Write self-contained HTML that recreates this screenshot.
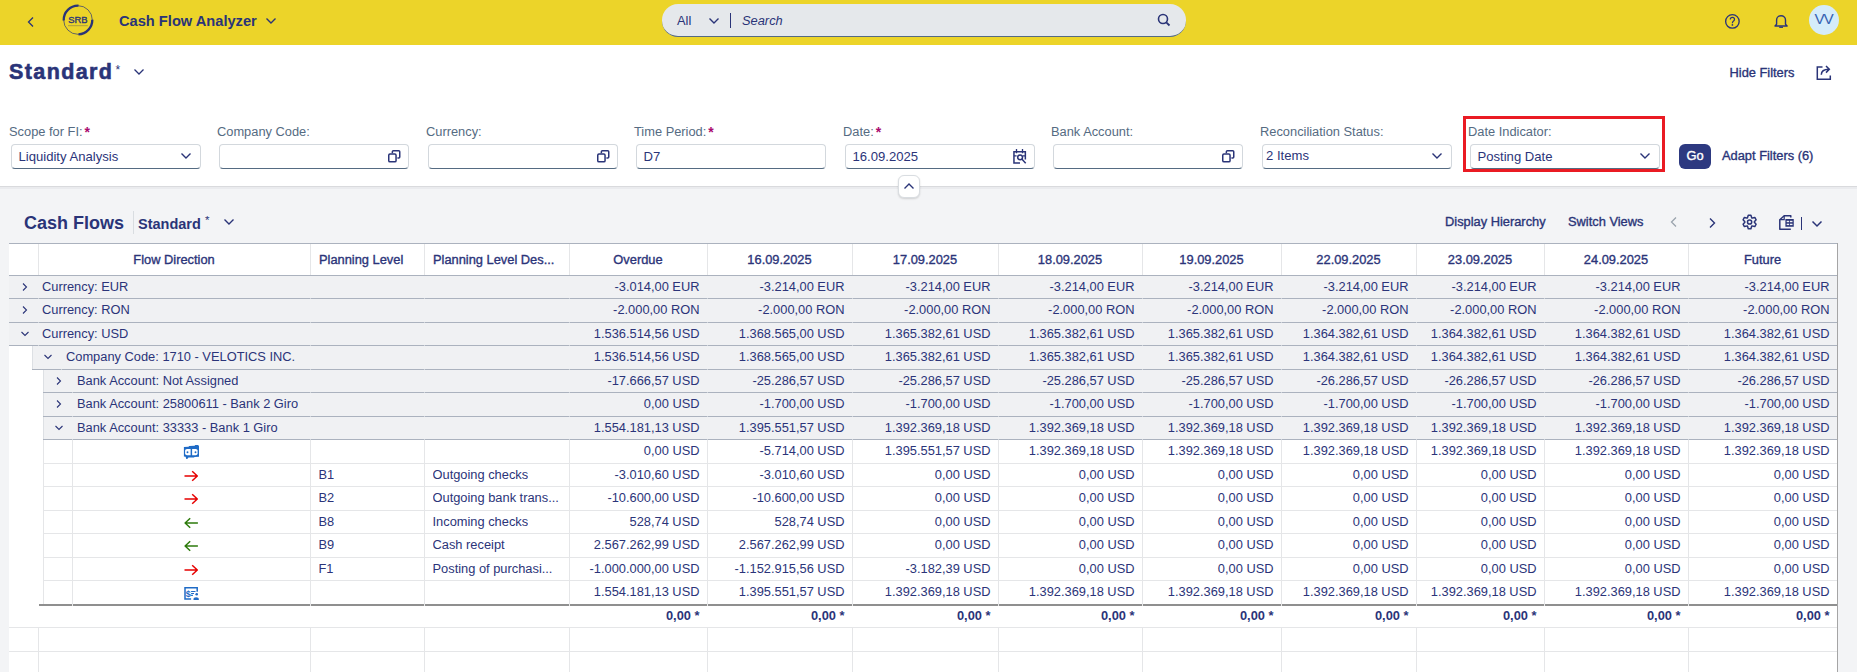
<!DOCTYPE html>
<html><head><meta charset="utf-8">
<style>
*{box-sizing:border-box;margin:0;padding:0}
html,body{width:1857px;height:672px;overflow:hidden;background:#F3F4F6;font-family:"Liberation Sans",sans-serif;color:#2B3479}
.a{position:absolute;white-space:nowrap}
.navy{color:#2A3478}
.lbl{position:absolute;white-space:nowrap;font-size:12.85px;line-height:15px;color:#556B82;top:124.1px}
.req{color:#AA0A6E;font-weight:bold;margin-left:2px;font-size:14px;line-height:0;position:relative;top:0.5px}
.inp{position:absolute;top:144px;height:25px;width:190px;border:1px solid #D3D8DD;border-bottom:1px solid #556B82;border-radius:4px;background:#fff;font-size:13.1px;color:#2B3479}
.inp span{position:absolute;left:6.5px;top:4px;white-space:nowrap}
.inp svg{position:absolute}
.c{position:absolute;white-space:nowrap;font-size:12.85px;color:#2B3479;overflow:hidden}
.r{text-align:right}
.hd{position:absolute;white-space:nowrap;font-size:12.85px;-webkit-text-stroke:0.35px #2B3479;color:#2B3479}
.sb{-webkit-text-stroke:0.35px #2A3478}
</style></head><body>

<div class="a" style="left:0;top:0;width:1857px;height:45px;background:#ECD429"></div>
<svg class="a" style="left:26px;top:16px" width="10" height="12" viewBox="0 0 10 12"><path d="M7 1.5 L2.5 6 L7 10.5" fill="none" stroke="#2A3478" stroke-width="1.3"/></svg>
<svg class="a" style="left:62px;top:4px" width="32" height="32" viewBox="0 0 32 32">
<circle cx="16" cy="16" r="14.3" fill="none" stroke="#2A3478" stroke-width="0.7"/>
<path d="M1.7 16.5 A14.3 14.3 0 0 1 16.5 1.7" fill="none" stroke="#2A3478" stroke-width="2.3"/>
<path d="M30.3 15.8 A14.3 14.3 0 0 1 16.5 30.3" fill="none" stroke="#2A3478" stroke-width="2.3"/>
<text x="15.8" y="19.1" font-family="Liberation Sans" font-size="9.4" font-weight="normal" stroke="#2A3478" stroke-width="0.35" text-anchor="middle" fill="#2A3478">SRB</text>
<rect x="6" y="21.1" width="19.8" height="1.1" fill="#2A3478" opacity="0.3"/></svg>
<div class="a navy" style="left:119px;top:12.7px;font-size:14.65px;font-weight:bold">Cash Flow Analyzer</div>
<svg class="a" style="left:265px;top:16px" width="12" height="10" viewBox="0 0 12 10"><path d="M1.5 2.5 L6 7 L10.5 2.5" fill="none" stroke="#2A3478" stroke-width="1.4"/></svg>
<div class="a" style="left:662px;top:4px;width:524px;height:32.8px;border-radius:16px;background:#E5E8EB;border-bottom:1px solid #556B82"></div>
<div class="a navy" style="left:677px;top:12.6px;font-size:12.85px">All</div>
<svg class="a" style="left:708px;top:15.5px" width="12" height="10" viewBox="0 0 12 10"><path d="M1.5 2.5 L6 7 L10.5 2.5" fill="none" stroke="#2A3478" stroke-width="1.4"/></svg>
<div class="a" style="left:730px;top:13px;width:1px;height:15px;background:#2A3478"></div>
<div class="a navy" style="left:742px;top:12.6px;font-size:12.85px;font-style:italic">Search</div>
<svg class="a" style="left:1157px;top:13px" width="14" height="14" viewBox="0 0 14 14"><circle cx="6" cy="6" r="4.5" fill="none" stroke="#2A3478" stroke-width="1.6"/><path d="M9.3 9.3 L12.5 12.5" stroke="#2A3478" stroke-width="1.8"/></svg>
<svg class="a" style="left:1724px;top:13px" width="17" height="17" viewBox="0 0 17 17"><circle cx="8.4" cy="8.4" r="6.75" fill="none" stroke="#2A3478" stroke-width="1.35"/><path d="M6.3 6.5 Q6.3 4.4 8.4 4.4 Q10.5 4.4 10.5 6.3 Q10.5 7.5 9.3 8.2 Q8.4 8.8 8.4 10.3" fill="none" stroke="#2A3478" stroke-width="1.25"/><circle cx="8.4" cy="11.9" r="0.85" fill="#2A3478"/></svg>
<svg class="a" style="left:1773px;top:14px" width="16" height="16" viewBox="0 0 16 16"><path d="M2 12 L3.6 10.3 V6 A4.45 4.3 0 0 1 12.5 6 V10.3 L14.1 12 Z" fill="none" stroke="#2A3478" stroke-width="1.4" stroke-linejoin="round"/><rect x="6.2" y="12.6" width="3.8" height="1.3" fill="#2A3478"/></svg>
<div class="a" style="left:1809px;top:5px;width:30px;height:30px;border-radius:50%;background:#D5ECFA"></div>
<div class="a" style="left:1814.6px;top:9.6px;font-size:15.3px;color:#3763B2;letter-spacing:-1.3px">VV</div>
<div class="a" style="left:0;top:45px;width:1857px;height:141px;background:#fff"></div><div class="a" style="left:0;top:186px;width:1857px;height:1px;background:#D9DADD"></div><div class="a" style="left:0;top:187px;width:1857px;height:2px;background:#EAEBEE"></div>
<div class="a navy" style="left:9px;top:59.5px;font-size:21.5px;font-weight:bold;letter-spacing:1.4px;-webkit-text-stroke:0.6px #2A3478">Standard</div>
<div class="a navy" style="left:115.5px;top:62.5px;font-size:12px">*</div>
<svg class="a" style="left:132.5px;top:67px" width="12" height="10" viewBox="0 0 12 10"><path d="M1.5 2.5 L6 7 L10.5 2.5" fill="none" stroke="#2A3478" stroke-width="1.3"/></svg>
<div class="a navy sb" style="left:1729.5px;top:65px;font-size:12.85px">Hide Filters</div>
<svg class="a" style="left:1815px;top:64px" width="18" height="17" viewBox="0 0 18 17"><path d="M7.5 3 H2.3 V15.3 H15.3 V11.5" fill="none" stroke="#2A3478" stroke-width="1.5"/><path d="M6.3 10.8 C6.3 6.8 9 5.3 14 5.3 M11 2 L14.3 5.3 L11 8.6" fill="none" stroke="#2A3478" stroke-width="1.5"/></svg>
<div class="lbl" style="left:9px">Scope for FI:<span class="req">*</span></div>
<div class="inp" style="left:11px"><span>Liquidity Analysis</span>
<svg style="left:168px;top:6px" width="12" height="10" viewBox="0 0 12 10"><path d="M1.5 2.5 L6 7 L10.5 2.5" fill="none" stroke="#2A3478" stroke-width="1.4"/></svg>
</div>
<div class="lbl" style="left:217px">Company Code:</div>
<div class="inp" style="left:219px"><span></span>
<svg style="left:166px;top:3.2px" width="16" height="16" viewBox="0 0 16 16"><rect x="2.75" y="5.95" width="7.3" height="7.9" rx="1.2" fill="none" stroke="#2A3478" stroke-width="1.5"/><path d="M6.35 5.2 V3.85 Q6.35 2.85 7.35 2.85 H12.75 Q13.75 2.85 13.75 3.85 V8.95 Q13.75 9.95 12.75 9.95 H11.4" fill="none" stroke="#2A3478" stroke-width="1.5"/></svg>
</div>
<div class="lbl" style="left:426px">Currency:</div>
<div class="inp" style="left:428px"><span></span>
<svg style="left:166px;top:3.2px" width="16" height="16" viewBox="0 0 16 16"><rect x="2.75" y="5.95" width="7.3" height="7.9" rx="1.2" fill="none" stroke="#2A3478" stroke-width="1.5"/><path d="M6.35 5.2 V3.85 Q6.35 2.85 7.35 2.85 H12.75 Q13.75 2.85 13.75 3.85 V8.95 Q13.75 9.95 12.75 9.95 H11.4" fill="none" stroke="#2A3478" stroke-width="1.5"/></svg>
</div>
<div class="lbl" style="left:634px">Time Period:<span class="req">*</span></div>
<div class="inp" style="left:636px"><span>D7</span>
</div>
<div class="lbl" style="left:843px">Date:<span class="req">*</span></div>
<div class="inp" style="left:845px"><span>16.09.2025</span>
<svg style="left:165.1px;top:2px" width="17" height="18" viewBox="0 0 17 18"><path d="M9 15.95 H2.95 V4.8 H14.35 V12.5" fill="none" stroke="#2A3478" stroke-width="1.5"/><path d="M5.5 2.1 V6.2 M11.5 2.1 V6.2" stroke="#2A3478" stroke-width="1.3"/><path d="M2.95 8.9 H5.6 M12 8.9 H14.35" stroke="#2A3478" stroke-width="1.3"/><circle cx="9.1" cy="10.3" r="2.4" fill="none" stroke="#2A3478" stroke-width="1.5"/><path d="M10.8 12.1 L14.7 16.3" stroke="#2A3478" stroke-width="1.5"/></svg>
</div>
<div class="lbl" style="left:1051px">Bank Account:</div>
<div class="inp" style="left:1053px"><span></span>
<svg style="left:166px;top:3.2px" width="16" height="16" viewBox="0 0 16 16"><rect x="2.75" y="5.95" width="7.3" height="7.9" rx="1.2" fill="none" stroke="#2A3478" stroke-width="1.5"/><path d="M6.35 5.2 V3.85 Q6.35 2.85 7.35 2.85 H12.75 Q13.75 2.85 13.75 3.85 V8.95 Q13.75 9.95 12.75 9.95 H11.4" fill="none" stroke="#2A3478" stroke-width="1.5"/></svg>
</div>
<div class="lbl" style="left:1260px">Reconciliation Status:</div>
<div class="inp" style="left:1262px"><span style="left:3px;top:3px">2 Items</span>
<svg style="left:168px;top:6px" width="12" height="10" viewBox="0 0 12 10"><path d="M1.5 2.5 L6 7 L10.5 2.5" fill="none" stroke="#2A3478" stroke-width="1.4"/></svg>
</div>
<div class="lbl" style="left:1468px">Date Indicator:</div>
<div class="inp" style="left:1470px"><span>Posting Date</span>
<svg style="left:168px;top:6px" width="12" height="10" viewBox="0 0 12 10"><path d="M1.5 2.5 L6 7 L10.5 2.5" fill="none" stroke="#2A3478" stroke-width="1.4"/></svg>
</div>
<div class="a" style="left:1463px;top:116px;width:202px;height:56px;border:3px solid #EA1B23"></div>
<div class="a" style="left:1679px;top:144px;width:32px;height:25px;border-radius:6px;background:#2D3980;color:#fff;font-size:12.85px;-webkit-text-stroke:0.4px #fff;text-align:center;line-height:24px">Go</div>
<div class="a navy sb" style="left:1722px;top:148px;font-size:12.85px">Adapt Filters (6)</div>
<div class="a" style="left:898px;top:175px;width:22px;height:22.5px;border-radius:6px;background:#fff;border:1px solid #D9DDE1;box-shadow:0 1px 2px rgba(0,0,0,0.15)"></div>
<svg class="a" style="left:903px;top:181px" width="12" height="10" viewBox="0 0 12 10"><path d="M1.5 7.5 L6 3 L10.5 7.5" fill="none" stroke="#2A3478" stroke-width="1.4"/></svg>
<div class="a navy" style="left:24px;top:212.7px;font-size:18px;font-weight:bold">Cash Flows</div>
<div class="a" style="left:133px;top:211px;width:1px;height:23px;background:#D9DDE1"></div>
<div class="a navy" style="left:138px;top:216px;font-size:14.5px;font-weight:bold">Standard</div>
<div class="a navy" style="left:205px;top:213.5px;font-size:11.5px">*</div>
<svg class="a" style="left:223px;top:217px" width="12" height="10" viewBox="0 0 12 10"><path d="M1.5 2.5 L6 7 L10.5 2.5" fill="none" stroke="#2A3478" stroke-width="1.4"/></svg>
<div class="a navy sb" style="left:1445px;top:214.4px;font-size:12.85px">Display Hierarchy</div>
<div class="a navy sb" style="left:1568px;top:214.4px;font-size:12.85px">Switch Views</div>
<svg class="a" style="left:1669px;top:216px" width="10" height="12" viewBox="0 0 10 12"><path d="M7 1.5 L2.5 6 L7 10.5" fill="none" stroke="#9AA3AE" stroke-width="1.3"/></svg>
<svg class="a" style="left:1706.5px;top:216.5px" width="10" height="12" viewBox="0 0 10 12"><path d="M3 1.5 L7.5 6 L3 10.5" fill="none" stroke="#2A3478" stroke-width="1.4"/></svg>
<svg class="a" style="left:1741px;top:213px" width="17" height="18" viewBox="0 0 17 18"><path d="M6.57 4.43 L7.28 2.23 L9.92 2.23 L10.63 4.43 Q10.75 5.28 11.54 4.95 L13.81 4.47 L15.12 6.75 L13.57 8.48 Q12.90 9.00 13.57 9.52 L15.12 11.25 L13.81 13.53 L11.54 13.05 Q10.75 12.72 10.63 13.57 L9.92 15.77 L7.28 15.77 L6.57 13.57 Q6.45 12.72 5.66 13.05 L3.39 13.53 L2.08 11.25 L3.63 9.52 Q4.30 9.00 3.63 8.48 L2.08 6.75 L3.39 4.47 L5.66 4.95 Q6.45 5.28 6.57 4.43 Z" fill="none" stroke="#2A3478" stroke-width="1.5" stroke-linejoin="round"/><circle cx="8.6" cy="9" r="2.1" fill="none" stroke="#2A3478" stroke-width="1.5"/></svg>
<svg class="a" style="left:1778px;top:213px" width="18" height="18" viewBox="0 0 18 18"><path d="M12.8 4.4 V2.7 H6.2 L1.8 6.7 V16.25 H12.8" fill="none" stroke="#2A3478" stroke-width="1.5" stroke-linejoin="round"/><path d="M6.2 2.7 V6.7 H1.8" fill="none" stroke="#2A3478" stroke-width="1.2"/><rect x="7.4" y="6" width="8.35" height="7.75" fill="#2A3478"/><rect x="8.7" y="7.8" width="2.5" height="1.4" fill="#F3F4F6"/><rect x="12" y="7.8" width="2.5" height="1.4" fill="#F3F4F6"/><rect x="8.7" y="10.7" width="2.5" height="1.4" fill="#F3F4F6"/><rect x="12" y="10.7" width="2.5" height="1.4" fill="#F3F4F6"/></svg>
<div class="a" style="left:1801px;top:217px;width:1.3px;height:13px;background:#2A3478"></div>
<svg class="a" style="left:1811px;top:218.5px" width="12" height="10" viewBox="0 0 12 10"><path d="M1.5 2.5 L6 7 L10.5 2.5" fill="none" stroke="#2A3478" stroke-width="1.5"/></svg>
<div class="a" style="left:9px;top:243px;width:1828px;height:32.5px;background:#fff;border-top:1px solid #A8B2BD"></div>
<div class="a" style="left:9px;top:243px;width:1828px;height:429px;background:#fff"></div>
<div class="a" style="left:9px;top:243px;width:1828px;height:1px;background:#ABB2BE"></div>
<div class="a" style="left:1837px;top:243px;width:1px;height:429px;background:#A5A5A5"></div>
<div class="a" style="left:38px;top:244px;width:1px;height:31.5px;background:#E5E6E8"></div>
<div class="a" style="left:310px;top:244px;width:1px;height:31.5px;background:#E5E6E8"></div>
<div class="a" style="left:424px;top:244px;width:1px;height:31.5px;background:#E5E6E8"></div>
<div class="a" style="left:569px;top:244px;width:1px;height:31.5px;background:#E5E6E8"></div>
<div class="a" style="left:707px;top:244px;width:1px;height:31.5px;background:#E5E6E8"></div>
<div class="a" style="left:852px;top:244px;width:1px;height:31.5px;background:#E5E6E8"></div>
<div class="a" style="left:998px;top:244px;width:1px;height:31.5px;background:#E5E6E8"></div>
<div class="a" style="left:1142px;top:244px;width:1px;height:31.5px;background:#E5E6E8"></div>
<div class="a" style="left:1281px;top:244px;width:1px;height:31.5px;background:#E5E6E8"></div>
<div class="a" style="left:1416px;top:244px;width:1px;height:31.5px;background:#E5E6E8"></div>
<div class="a" style="left:1544px;top:244px;width:1px;height:31.5px;background:#E5E6E8"></div>
<div class="a" style="left:1688px;top:244px;width:1px;height:31.5px;background:#E5E6E8"></div>
<div class="hd" style="left:38px;width:272px;top:252.3px;text-align:center">Flow Direction</div>
<div class="hd" style="left:319px;top:252.3px">Planning Level</div>
<div class="hd" style="left:433px;top:252.3px">Planning Level Des...</div>
<div class="hd" style="left:569px;width:138px;top:252.3px;text-align:center">Overdue</div>
<div class="hd" style="left:707px;width:145px;top:252.3px;text-align:center">16.09.2025</div>
<div class="hd" style="left:852px;width:146px;top:252.3px;text-align:center">17.09.2025</div>
<div class="hd" style="left:998px;width:144px;top:252.3px;text-align:center">18.09.2025</div>
<div class="hd" style="left:1142px;width:139px;top:252.3px;text-align:center">19.09.2025</div>
<div class="hd" style="left:1281px;width:135px;top:252.3px;text-align:center">22.09.2025</div>
<div class="hd" style="left:1416px;width:128px;top:252.3px;text-align:center">23.09.2025</div>
<div class="hd" style="left:1544px;width:144px;top:252.3px;text-align:center">24.09.2025</div>
<div class="hd" style="left:1688px;width:149px;top:252.3px;text-align:center">Future</div>
<div class="a" style="left:9px;top:275.5px;width:1828px;height:23.53px;background:#F0F1F3"></div>
<div class="a" style="left:9px;top:298.03px;width:1828px;height:1px;background:#ABB2BE"></div>
<div class="a" style="left:38px;top:298.03px;width:1px;height:1px;background:#D0D5DB"></div>
<div class="a" style="left:310px;top:298.03px;width:1px;height:1px;background:#D0D5DB"></div>
<div class="a" style="left:424px;top:298.03px;width:1px;height:1px;background:#D0D5DB"></div>
<div class="a" style="left:569px;top:298.03px;width:1px;height:1px;background:#D0D5DB"></div>
<div class="a" style="left:707px;top:298.03px;width:1px;height:1px;background:#D0D5DB"></div>
<div class="a" style="left:852px;top:298.03px;width:1px;height:1px;background:#D0D5DB"></div>
<div class="a" style="left:998px;top:298.03px;width:1px;height:1px;background:#D0D5DB"></div>
<div class="a" style="left:1142px;top:298.03px;width:1px;height:1px;background:#D0D5DB"></div>
<div class="a" style="left:1281px;top:298.03px;width:1px;height:1px;background:#D0D5DB"></div>
<div class="a" style="left:1416px;top:298.03px;width:1px;height:1px;background:#D0D5DB"></div>
<div class="a" style="left:1544px;top:298.03px;width:1px;height:1px;background:#D0D5DB"></div>
<div class="a" style="left:1688px;top:298.03px;width:1px;height:1px;background:#D0D5DB"></div>
<svg class="a" style="left:21px;top:281.5px" width="8" height="10" viewBox="0 0 8 10"><path d="M2 1.5 L5.5 5 L2 8.5" fill="none" stroke="#2A3478" stroke-width="1.1"/></svg>
<div class="c" style="left:42px;top:278.5px">Currency: EUR</div>
<div class="c r" style="left:569px;width:130.5px;top:278.5px">-3.014,00 EUR</div>
<div class="c r" style="left:707px;width:137.5px;top:278.5px">-3.214,00 EUR</div>
<div class="c r" style="left:852px;width:138.5px;top:278.5px">-3.214,00 EUR</div>
<div class="c r" style="left:998px;width:136.5px;top:278.5px">-3.214,00 EUR</div>
<div class="c r" style="left:1142px;width:131.5px;top:278.5px">-3.214,00 EUR</div>
<div class="c r" style="left:1281px;width:127.5px;top:278.5px">-3.214,00 EUR</div>
<div class="c r" style="left:1416px;width:120.5px;top:278.5px">-3.214,00 EUR</div>
<div class="c r" style="left:1544px;width:136.5px;top:278.5px">-3.214,00 EUR</div>
<div class="c r" style="left:1688px;width:141.5px;top:278.5px">-3.214,00 EUR</div>
<div class="a" style="left:9px;top:299.03px;width:1828px;height:23.53px;background:#F0F1F3"></div>
<div class="a" style="left:9px;top:321.55999999999995px;width:1828px;height:1px;background:#ABB2BE"></div>
<div class="a" style="left:38px;top:321.55999999999995px;width:1px;height:1px;background:#D0D5DB"></div>
<div class="a" style="left:310px;top:321.55999999999995px;width:1px;height:1px;background:#D0D5DB"></div>
<div class="a" style="left:424px;top:321.55999999999995px;width:1px;height:1px;background:#D0D5DB"></div>
<div class="a" style="left:569px;top:321.55999999999995px;width:1px;height:1px;background:#D0D5DB"></div>
<div class="a" style="left:707px;top:321.55999999999995px;width:1px;height:1px;background:#D0D5DB"></div>
<div class="a" style="left:852px;top:321.55999999999995px;width:1px;height:1px;background:#D0D5DB"></div>
<div class="a" style="left:998px;top:321.55999999999995px;width:1px;height:1px;background:#D0D5DB"></div>
<div class="a" style="left:1142px;top:321.55999999999995px;width:1px;height:1px;background:#D0D5DB"></div>
<div class="a" style="left:1281px;top:321.55999999999995px;width:1px;height:1px;background:#D0D5DB"></div>
<div class="a" style="left:1416px;top:321.55999999999995px;width:1px;height:1px;background:#D0D5DB"></div>
<div class="a" style="left:1544px;top:321.55999999999995px;width:1px;height:1px;background:#D0D5DB"></div>
<div class="a" style="left:1688px;top:321.55999999999995px;width:1px;height:1px;background:#D0D5DB"></div>
<svg class="a" style="left:21px;top:305.03px" width="8" height="10" viewBox="0 0 8 10"><path d="M2 1.5 L5.5 5 L2 8.5" fill="none" stroke="#2A3478" stroke-width="1.1"/></svg>
<div class="c" style="left:42px;top:302.03px">Currency: RON</div>
<div class="c r" style="left:569px;width:130.5px;top:302.03px">-2.000,00 RON</div>
<div class="c r" style="left:707px;width:137.5px;top:302.03px">-2.000,00 RON</div>
<div class="c r" style="left:852px;width:138.5px;top:302.03px">-2.000,00 RON</div>
<div class="c r" style="left:998px;width:136.5px;top:302.03px">-2.000,00 RON</div>
<div class="c r" style="left:1142px;width:131.5px;top:302.03px">-2.000,00 RON</div>
<div class="c r" style="left:1281px;width:127.5px;top:302.03px">-2.000,00 RON</div>
<div class="c r" style="left:1416px;width:120.5px;top:302.03px">-2.000,00 RON</div>
<div class="c r" style="left:1544px;width:136.5px;top:302.03px">-2.000,00 RON</div>
<div class="c r" style="left:1688px;width:141.5px;top:302.03px">-2.000,00 RON</div>
<div class="a" style="left:9px;top:322.56px;width:1828px;height:23.53px;background:#F0F1F3"></div>
<div class="a" style="left:9px;top:345.09000000000003px;width:1828px;height:1px;background:#ABB2BE"></div>
<div class="a" style="left:38px;top:345.09000000000003px;width:1px;height:1px;background:#D0D5DB"></div>
<div class="a" style="left:310px;top:345.09000000000003px;width:1px;height:1px;background:#D0D5DB"></div>
<div class="a" style="left:424px;top:345.09000000000003px;width:1px;height:1px;background:#D0D5DB"></div>
<div class="a" style="left:569px;top:345.09000000000003px;width:1px;height:1px;background:#D0D5DB"></div>
<div class="a" style="left:707px;top:345.09000000000003px;width:1px;height:1px;background:#D0D5DB"></div>
<div class="a" style="left:852px;top:345.09000000000003px;width:1px;height:1px;background:#D0D5DB"></div>
<div class="a" style="left:998px;top:345.09000000000003px;width:1px;height:1px;background:#D0D5DB"></div>
<div class="a" style="left:1142px;top:345.09000000000003px;width:1px;height:1px;background:#D0D5DB"></div>
<div class="a" style="left:1281px;top:345.09000000000003px;width:1px;height:1px;background:#D0D5DB"></div>
<div class="a" style="left:1416px;top:345.09000000000003px;width:1px;height:1px;background:#D0D5DB"></div>
<div class="a" style="left:1544px;top:345.09000000000003px;width:1px;height:1px;background:#D0D5DB"></div>
<div class="a" style="left:1688px;top:345.09000000000003px;width:1px;height:1px;background:#D0D5DB"></div>
<svg class="a" style="left:20px;top:329.56px" width="10" height="8" viewBox="0 0 10 8"><path d="M1.5 2 L5 5.5 L8.5 2" fill="none" stroke="#2A3478" stroke-width="1.1"/></svg>
<div class="c" style="left:42px;top:325.56px">Currency: USD</div>
<div class="c r" style="left:569px;width:130.5px;top:325.56px">1.536.514,56 USD</div>
<div class="c r" style="left:707px;width:137.5px;top:325.56px">1.368.565,00 USD</div>
<div class="c r" style="left:852px;width:138.5px;top:325.56px">1.365.382,61 USD</div>
<div class="c r" style="left:998px;width:136.5px;top:325.56px">1.365.382,61 USD</div>
<div class="c r" style="left:1142px;width:131.5px;top:325.56px">1.365.382,61 USD</div>
<div class="c r" style="left:1281px;width:127.5px;top:325.56px">1.364.382,61 USD</div>
<div class="c r" style="left:1416px;width:120.5px;top:325.56px">1.364.382,61 USD</div>
<div class="c r" style="left:1544px;width:136.5px;top:325.56px">1.364.382,61 USD</div>
<div class="c r" style="left:1688px;width:141.5px;top:325.56px">1.364.382,61 USD</div>
<div class="a" style="left:32px;top:346.09000000000003px;width:1805px;height:23.53px;background:#F0F1F3"></div>
<div class="a" style="left:32px;top:346.09000000000003px;width:1px;height:23.53px;background:#DDE0E4"></div>
<div class="a" style="left:32px;top:368.62px;width:1805px;height:1px;background:#ABB2BE"></div>
<div class="a" style="left:61px;top:368.62px;width:1px;height:1px;background:#D0D5DB"></div>
<div class="a" style="left:310px;top:368.62px;width:1px;height:1px;background:#D0D5DB"></div>
<div class="a" style="left:424px;top:368.62px;width:1px;height:1px;background:#D0D5DB"></div>
<div class="a" style="left:569px;top:368.62px;width:1px;height:1px;background:#D0D5DB"></div>
<div class="a" style="left:707px;top:368.62px;width:1px;height:1px;background:#D0D5DB"></div>
<div class="a" style="left:852px;top:368.62px;width:1px;height:1px;background:#D0D5DB"></div>
<div class="a" style="left:998px;top:368.62px;width:1px;height:1px;background:#D0D5DB"></div>
<div class="a" style="left:1142px;top:368.62px;width:1px;height:1px;background:#D0D5DB"></div>
<div class="a" style="left:1281px;top:368.62px;width:1px;height:1px;background:#D0D5DB"></div>
<div class="a" style="left:1416px;top:368.62px;width:1px;height:1px;background:#D0D5DB"></div>
<div class="a" style="left:1544px;top:368.62px;width:1px;height:1px;background:#D0D5DB"></div>
<div class="a" style="left:1688px;top:368.62px;width:1px;height:1px;background:#D0D5DB"></div>
<svg class="a" style="left:43px;top:353.09000000000003px" width="10" height="8" viewBox="0 0 10 8"><path d="M1.5 2 L5 5.5 L8.5 2" fill="none" stroke="#2A3478" stroke-width="1.1"/></svg>
<div class="c" style="left:66px;top:349.09000000000003px">Company Code: 1710 - VELOTICS INC.</div>
<div class="c r" style="left:569px;width:130.5px;top:349.09000000000003px">1.536.514,56 USD</div>
<div class="c r" style="left:707px;width:137.5px;top:349.09000000000003px">1.368.565,00 USD</div>
<div class="c r" style="left:852px;width:138.5px;top:349.09000000000003px">1.365.382,61 USD</div>
<div class="c r" style="left:998px;width:136.5px;top:349.09000000000003px">1.365.382,61 USD</div>
<div class="c r" style="left:1142px;width:131.5px;top:349.09000000000003px">1.365.382,61 USD</div>
<div class="c r" style="left:1281px;width:127.5px;top:349.09000000000003px">1.364.382,61 USD</div>
<div class="c r" style="left:1416px;width:120.5px;top:349.09000000000003px">1.364.382,61 USD</div>
<div class="c r" style="left:1544px;width:136.5px;top:349.09000000000003px">1.364.382,61 USD</div>
<div class="c r" style="left:1688px;width:141.5px;top:349.09000000000003px">1.364.382,61 USD</div>
<div class="a" style="left:43px;top:369.62px;width:1794px;height:23.53px;background:#F0F1F3"></div>
<div class="a" style="left:43px;top:369.62px;width:1px;height:23.53px;background:#DDE0E4"></div>
<div class="a" style="left:43px;top:392.15px;width:1794px;height:1px;background:#ABB2BE"></div>
<div class="a" style="left:72px;top:392.15px;width:1px;height:1px;background:#D0D5DB"></div>
<div class="a" style="left:310px;top:392.15px;width:1px;height:1px;background:#D0D5DB"></div>
<div class="a" style="left:424px;top:392.15px;width:1px;height:1px;background:#D0D5DB"></div>
<div class="a" style="left:569px;top:392.15px;width:1px;height:1px;background:#D0D5DB"></div>
<div class="a" style="left:707px;top:392.15px;width:1px;height:1px;background:#D0D5DB"></div>
<div class="a" style="left:852px;top:392.15px;width:1px;height:1px;background:#D0D5DB"></div>
<div class="a" style="left:998px;top:392.15px;width:1px;height:1px;background:#D0D5DB"></div>
<div class="a" style="left:1142px;top:392.15px;width:1px;height:1px;background:#D0D5DB"></div>
<div class="a" style="left:1281px;top:392.15px;width:1px;height:1px;background:#D0D5DB"></div>
<div class="a" style="left:1416px;top:392.15px;width:1px;height:1px;background:#D0D5DB"></div>
<div class="a" style="left:1544px;top:392.15px;width:1px;height:1px;background:#D0D5DB"></div>
<div class="a" style="left:1688px;top:392.15px;width:1px;height:1px;background:#D0D5DB"></div>
<svg class="a" style="left:55px;top:375.62px" width="8" height="10" viewBox="0 0 8 10"><path d="M2 1.5 L5.5 5 L2 8.5" fill="none" stroke="#2A3478" stroke-width="1.1"/></svg>
<div class="c" style="left:77px;top:372.62px">Bank Account: Not Assigned</div>
<div class="c r" style="left:569px;width:130.5px;top:372.62px">-17.666,57 USD</div>
<div class="c r" style="left:707px;width:137.5px;top:372.62px">-25.286,57 USD</div>
<div class="c r" style="left:852px;width:138.5px;top:372.62px">-25.286,57 USD</div>
<div class="c r" style="left:998px;width:136.5px;top:372.62px">-25.286,57 USD</div>
<div class="c r" style="left:1142px;width:131.5px;top:372.62px">-25.286,57 USD</div>
<div class="c r" style="left:1281px;width:127.5px;top:372.62px">-26.286,57 USD</div>
<div class="c r" style="left:1416px;width:120.5px;top:372.62px">-26.286,57 USD</div>
<div class="c r" style="left:1544px;width:136.5px;top:372.62px">-26.286,57 USD</div>
<div class="c r" style="left:1688px;width:141.5px;top:372.62px">-26.286,57 USD</div>
<div class="a" style="left:43px;top:393.15px;width:1794px;height:23.53px;background:#F0F1F3"></div>
<div class="a" style="left:43px;top:393.15px;width:1px;height:23.53px;background:#DDE0E4"></div>
<div class="a" style="left:43px;top:415.67999999999995px;width:1794px;height:1px;background:#ABB2BE"></div>
<div class="a" style="left:72px;top:415.67999999999995px;width:1px;height:1px;background:#D0D5DB"></div>
<div class="a" style="left:310px;top:415.67999999999995px;width:1px;height:1px;background:#D0D5DB"></div>
<div class="a" style="left:424px;top:415.67999999999995px;width:1px;height:1px;background:#D0D5DB"></div>
<div class="a" style="left:569px;top:415.67999999999995px;width:1px;height:1px;background:#D0D5DB"></div>
<div class="a" style="left:707px;top:415.67999999999995px;width:1px;height:1px;background:#D0D5DB"></div>
<div class="a" style="left:852px;top:415.67999999999995px;width:1px;height:1px;background:#D0D5DB"></div>
<div class="a" style="left:998px;top:415.67999999999995px;width:1px;height:1px;background:#D0D5DB"></div>
<div class="a" style="left:1142px;top:415.67999999999995px;width:1px;height:1px;background:#D0D5DB"></div>
<div class="a" style="left:1281px;top:415.67999999999995px;width:1px;height:1px;background:#D0D5DB"></div>
<div class="a" style="left:1416px;top:415.67999999999995px;width:1px;height:1px;background:#D0D5DB"></div>
<div class="a" style="left:1544px;top:415.67999999999995px;width:1px;height:1px;background:#D0D5DB"></div>
<div class="a" style="left:1688px;top:415.67999999999995px;width:1px;height:1px;background:#D0D5DB"></div>
<svg class="a" style="left:55px;top:399.15px" width="8" height="10" viewBox="0 0 8 10"><path d="M2 1.5 L5.5 5 L2 8.5" fill="none" stroke="#2A3478" stroke-width="1.1"/></svg>
<div class="c" style="left:77px;top:396.15px">Bank Account: 25800611 - Bank 2 Giro</div>
<div class="c r" style="left:569px;width:130.5px;top:396.15px">0,00 USD</div>
<div class="c r" style="left:707px;width:137.5px;top:396.15px">-1.700,00 USD</div>
<div class="c r" style="left:852px;width:138.5px;top:396.15px">-1.700,00 USD</div>
<div class="c r" style="left:998px;width:136.5px;top:396.15px">-1.700,00 USD</div>
<div class="c r" style="left:1142px;width:131.5px;top:396.15px">-1.700,00 USD</div>
<div class="c r" style="left:1281px;width:127.5px;top:396.15px">-1.700,00 USD</div>
<div class="c r" style="left:1416px;width:120.5px;top:396.15px">-1.700,00 USD</div>
<div class="c r" style="left:1544px;width:136.5px;top:396.15px">-1.700,00 USD</div>
<div class="c r" style="left:1688px;width:141.5px;top:396.15px">-1.700,00 USD</div>
<div class="a" style="left:43px;top:416.68px;width:1794px;height:23.53px;background:#F0F1F3"></div>
<div class="a" style="left:43px;top:416.68px;width:1px;height:23.53px;background:#DDE0E4"></div>
<div class="a" style="left:43px;top:439.21000000000004px;width:1794px;height:1px;background:#ABB2BE"></div>
<div class="a" style="left:72px;top:439.21000000000004px;width:1px;height:1px;background:#D0D5DB"></div>
<div class="a" style="left:310px;top:439.21000000000004px;width:1px;height:1px;background:#D0D5DB"></div>
<div class="a" style="left:424px;top:439.21000000000004px;width:1px;height:1px;background:#D0D5DB"></div>
<div class="a" style="left:569px;top:439.21000000000004px;width:1px;height:1px;background:#D0D5DB"></div>
<div class="a" style="left:707px;top:439.21000000000004px;width:1px;height:1px;background:#D0D5DB"></div>
<div class="a" style="left:852px;top:439.21000000000004px;width:1px;height:1px;background:#D0D5DB"></div>
<div class="a" style="left:998px;top:439.21000000000004px;width:1px;height:1px;background:#D0D5DB"></div>
<div class="a" style="left:1142px;top:439.21000000000004px;width:1px;height:1px;background:#D0D5DB"></div>
<div class="a" style="left:1281px;top:439.21000000000004px;width:1px;height:1px;background:#D0D5DB"></div>
<div class="a" style="left:1416px;top:439.21000000000004px;width:1px;height:1px;background:#D0D5DB"></div>
<div class="a" style="left:1544px;top:439.21000000000004px;width:1px;height:1px;background:#D0D5DB"></div>
<div class="a" style="left:1688px;top:439.21000000000004px;width:1px;height:1px;background:#D0D5DB"></div>
<svg class="a" style="left:54px;top:423.68px" width="10" height="8" viewBox="0 0 10 8"><path d="M1.5 2 L5 5.5 L8.5 2" fill="none" stroke="#2A3478" stroke-width="1.1"/></svg>
<div class="c" style="left:77px;top:419.68px">Bank Account: 33333 - Bank 1 Giro</div>
<div class="c r" style="left:569px;width:130.5px;top:419.68px">1.554.181,13 USD</div>
<div class="c r" style="left:707px;width:137.5px;top:419.68px">1.395.551,57 USD</div>
<div class="c r" style="left:852px;width:138.5px;top:419.68px">1.392.369,18 USD</div>
<div class="c r" style="left:998px;width:136.5px;top:419.68px">1.392.369,18 USD</div>
<div class="c r" style="left:1142px;width:131.5px;top:419.68px">1.392.369,18 USD</div>
<div class="c r" style="left:1281px;width:127.5px;top:419.68px">1.392.369,18 USD</div>
<div class="c r" style="left:1416px;width:120.5px;top:419.68px">1.392.369,18 USD</div>
<div class="c r" style="left:1544px;width:136.5px;top:419.68px">1.392.369,18 USD</div>
<div class="c r" style="left:1688px;width:141.5px;top:419.68px">1.392.369,18 USD</div>
<div class="a" style="left:43px;top:440.21000000000004px;width:1px;height:23.53px;background:#E5E6E8"></div>
<div class="a" style="left:72px;top:440.21000000000004px;width:1px;height:23.53px;background:#E5E6E8"></div>
<div class="a" style="left:310px;top:440.21000000000004px;width:1px;height:23.53px;background:#E5E6E8"></div>
<div class="a" style="left:424px;top:440.21000000000004px;width:1px;height:23.53px;background:#E5E6E8"></div>
<div class="a" style="left:569px;top:440.21000000000004px;width:1px;height:23.53px;background:#E5E6E8"></div>
<div class="a" style="left:707px;top:440.21000000000004px;width:1px;height:23.53px;background:#E5E6E8"></div>
<div class="a" style="left:852px;top:440.21000000000004px;width:1px;height:23.53px;background:#E5E6E8"></div>
<div class="a" style="left:998px;top:440.21000000000004px;width:1px;height:23.53px;background:#E5E6E8"></div>
<div class="a" style="left:1142px;top:440.21000000000004px;width:1px;height:23.53px;background:#E5E6E8"></div>
<div class="a" style="left:1281px;top:440.21000000000004px;width:1px;height:23.53px;background:#E5E6E8"></div>
<div class="a" style="left:1416px;top:440.21000000000004px;width:1px;height:23.53px;background:#E5E6E8"></div>
<div class="a" style="left:1544px;top:440.21000000000004px;width:1px;height:23.53px;background:#E5E6E8"></div>
<div class="a" style="left:1688px;top:440.21000000000004px;width:1px;height:23.53px;background:#E5E6E8"></div>
<div class="a" style="left:43px;top:462.74px;width:1794px;height:1px;background:#E5E6E8"></div>
<svg class="a" style="left:183px;top:444px" width="17" height="16" viewBox="0 0 17 16"><path d="M0.9 3.1 L5.5 2.7 L6.2 1.9 L11.6 1.8 L12.3 1 L15.2 1 L16 2.3 V12.7 L11.6 13 L11 13.6 H5.4 L4.3 15 L3.3 15 L2.6 12.8 L0.9 12.6 Z" fill="#1F6BC6"/><path d="M2.1 6.6 Q2.1 4.9 4 4.9 H7.6 V11.2 H4 Q2.1 11.2 2.1 9.5 Z" fill="#fff"/><path d="M9.1 4.9 H12.7 Q14.6 4.9 14.6 6.6 V9.5 Q14.6 11.2 12.7 11.2 H9.1 Z" fill="#fff"/><circle cx="4.5" cy="8.3" r="0.95" fill="#1F6BC6"/><circle cx="12.5" cy="8.3" r="0.95" fill="#1F6BC6"/></svg>
<div class="c r" style="left:569px;width:130.5px;top:443.21000000000004px">0,00 USD</div>
<div class="c r" style="left:707px;width:137.5px;top:443.21000000000004px">-5.714,00 USD</div>
<div class="c r" style="left:852px;width:138.5px;top:443.21000000000004px">1.395.551,57 USD</div>
<div class="c r" style="left:998px;width:136.5px;top:443.21000000000004px">1.392.369,18 USD</div>
<div class="c r" style="left:1142px;width:131.5px;top:443.21000000000004px">1.392.369,18 USD</div>
<div class="c r" style="left:1281px;width:127.5px;top:443.21000000000004px">1.392.369,18 USD</div>
<div class="c r" style="left:1416px;width:120.5px;top:443.21000000000004px">1.392.369,18 USD</div>
<div class="c r" style="left:1544px;width:136.5px;top:443.21000000000004px">1.392.369,18 USD</div>
<div class="c r" style="left:1688px;width:141.5px;top:443.21000000000004px">1.392.369,18 USD</div>
<div class="a" style="left:43px;top:463.74px;width:1px;height:23.53px;background:#E5E6E8"></div>
<div class="a" style="left:72px;top:463.74px;width:1px;height:23.53px;background:#E5E6E8"></div>
<div class="a" style="left:310px;top:463.74px;width:1px;height:23.53px;background:#E5E6E8"></div>
<div class="a" style="left:424px;top:463.74px;width:1px;height:23.53px;background:#E5E6E8"></div>
<div class="a" style="left:569px;top:463.74px;width:1px;height:23.53px;background:#E5E6E8"></div>
<div class="a" style="left:707px;top:463.74px;width:1px;height:23.53px;background:#E5E6E8"></div>
<div class="a" style="left:852px;top:463.74px;width:1px;height:23.53px;background:#E5E6E8"></div>
<div class="a" style="left:998px;top:463.74px;width:1px;height:23.53px;background:#E5E6E8"></div>
<div class="a" style="left:1142px;top:463.74px;width:1px;height:23.53px;background:#E5E6E8"></div>
<div class="a" style="left:1281px;top:463.74px;width:1px;height:23.53px;background:#E5E6E8"></div>
<div class="a" style="left:1416px;top:463.74px;width:1px;height:23.53px;background:#E5E6E8"></div>
<div class="a" style="left:1544px;top:463.74px;width:1px;height:23.53px;background:#E5E6E8"></div>
<div class="a" style="left:1688px;top:463.74px;width:1px;height:23.53px;background:#E5E6E8"></div>
<div class="a" style="left:43px;top:486.27px;width:1794px;height:1px;background:#E5E6E8"></div>
<svg class="a" style="left:183px;top:470px" width="17" height="12" viewBox="0 0 17 12"><path d="M1.5 6 H14.3 M9.2 1.2 L14.3 6 L9.2 10.8" fill="none" stroke="#E60000" stroke-width="1.5" stroke-linejoin="round"/></svg>
<div class="c" style="left:318.5px;top:466.74px">B1</div>
<div class="c" style="left:432.5px;top:466.74px">Outgoing checks</div>
<div class="c r" style="left:569px;width:130.5px;top:466.74px">-3.010,60 USD</div>
<div class="c r" style="left:707px;width:137.5px;top:466.74px">-3.010,60 USD</div>
<div class="c r" style="left:852px;width:138.5px;top:466.74px">0,00 USD</div>
<div class="c r" style="left:998px;width:136.5px;top:466.74px">0,00 USD</div>
<div class="c r" style="left:1142px;width:131.5px;top:466.74px">0,00 USD</div>
<div class="c r" style="left:1281px;width:127.5px;top:466.74px">0,00 USD</div>
<div class="c r" style="left:1416px;width:120.5px;top:466.74px">0,00 USD</div>
<div class="c r" style="left:1544px;width:136.5px;top:466.74px">0,00 USD</div>
<div class="c r" style="left:1688px;width:141.5px;top:466.74px">0,00 USD</div>
<div class="a" style="left:43px;top:487.27px;width:1px;height:23.53px;background:#E5E6E8"></div>
<div class="a" style="left:72px;top:487.27px;width:1px;height:23.53px;background:#E5E6E8"></div>
<div class="a" style="left:310px;top:487.27px;width:1px;height:23.53px;background:#E5E6E8"></div>
<div class="a" style="left:424px;top:487.27px;width:1px;height:23.53px;background:#E5E6E8"></div>
<div class="a" style="left:569px;top:487.27px;width:1px;height:23.53px;background:#E5E6E8"></div>
<div class="a" style="left:707px;top:487.27px;width:1px;height:23.53px;background:#E5E6E8"></div>
<div class="a" style="left:852px;top:487.27px;width:1px;height:23.53px;background:#E5E6E8"></div>
<div class="a" style="left:998px;top:487.27px;width:1px;height:23.53px;background:#E5E6E8"></div>
<div class="a" style="left:1142px;top:487.27px;width:1px;height:23.53px;background:#E5E6E8"></div>
<div class="a" style="left:1281px;top:487.27px;width:1px;height:23.53px;background:#E5E6E8"></div>
<div class="a" style="left:1416px;top:487.27px;width:1px;height:23.53px;background:#E5E6E8"></div>
<div class="a" style="left:1544px;top:487.27px;width:1px;height:23.53px;background:#E5E6E8"></div>
<div class="a" style="left:1688px;top:487.27px;width:1px;height:23.53px;background:#E5E6E8"></div>
<div class="a" style="left:43px;top:509.79999999999995px;width:1794px;height:1px;background:#E5E6E8"></div>
<svg class="a" style="left:183px;top:493px" width="17" height="12" viewBox="0 0 17 12"><path d="M1.5 6 H14.3 M9.2 1.2 L14.3 6 L9.2 10.8" fill="none" stroke="#E60000" stroke-width="1.5" stroke-linejoin="round"/></svg>
<div class="c" style="left:318.5px;top:490.27px">B2</div>
<div class="c" style="left:432.5px;top:490.27px">Outgoing bank trans...</div>
<div class="c r" style="left:569px;width:130.5px;top:490.27px">-10.600,00 USD</div>
<div class="c r" style="left:707px;width:137.5px;top:490.27px">-10.600,00 USD</div>
<div class="c r" style="left:852px;width:138.5px;top:490.27px">0,00 USD</div>
<div class="c r" style="left:998px;width:136.5px;top:490.27px">0,00 USD</div>
<div class="c r" style="left:1142px;width:131.5px;top:490.27px">0,00 USD</div>
<div class="c r" style="left:1281px;width:127.5px;top:490.27px">0,00 USD</div>
<div class="c r" style="left:1416px;width:120.5px;top:490.27px">0,00 USD</div>
<div class="c r" style="left:1544px;width:136.5px;top:490.27px">0,00 USD</div>
<div class="c r" style="left:1688px;width:141.5px;top:490.27px">0,00 USD</div>
<div class="a" style="left:43px;top:510.8px;width:1px;height:23.53px;background:#E5E6E8"></div>
<div class="a" style="left:72px;top:510.8px;width:1px;height:23.53px;background:#E5E6E8"></div>
<div class="a" style="left:310px;top:510.8px;width:1px;height:23.53px;background:#E5E6E8"></div>
<div class="a" style="left:424px;top:510.8px;width:1px;height:23.53px;background:#E5E6E8"></div>
<div class="a" style="left:569px;top:510.8px;width:1px;height:23.53px;background:#E5E6E8"></div>
<div class="a" style="left:707px;top:510.8px;width:1px;height:23.53px;background:#E5E6E8"></div>
<div class="a" style="left:852px;top:510.8px;width:1px;height:23.53px;background:#E5E6E8"></div>
<div class="a" style="left:998px;top:510.8px;width:1px;height:23.53px;background:#E5E6E8"></div>
<div class="a" style="left:1142px;top:510.8px;width:1px;height:23.53px;background:#E5E6E8"></div>
<div class="a" style="left:1281px;top:510.8px;width:1px;height:23.53px;background:#E5E6E8"></div>
<div class="a" style="left:1416px;top:510.8px;width:1px;height:23.53px;background:#E5E6E8"></div>
<div class="a" style="left:1544px;top:510.8px;width:1px;height:23.53px;background:#E5E6E8"></div>
<div class="a" style="left:1688px;top:510.8px;width:1px;height:23.53px;background:#E5E6E8"></div>
<div class="a" style="left:43px;top:533.33px;width:1794px;height:1px;background:#E5E6E8"></div>
<svg class="a" style="left:183px;top:517px" width="17" height="12" viewBox="0 0 17 12"><path d="M14.9 6 H2.1 M7.2 1.2 L2.1 6 L7.2 10.8" fill="none" stroke="#2E7B0C" stroke-width="1.5" stroke-linejoin="round"/></svg>
<div class="c" style="left:318.5px;top:513.8px">B8</div>
<div class="c" style="left:432.5px;top:513.8px">Incoming checks</div>
<div class="c r" style="left:569px;width:130.5px;top:513.8px">528,74 USD</div>
<div class="c r" style="left:707px;width:137.5px;top:513.8px">528,74 USD</div>
<div class="c r" style="left:852px;width:138.5px;top:513.8px">0,00 USD</div>
<div class="c r" style="left:998px;width:136.5px;top:513.8px">0,00 USD</div>
<div class="c r" style="left:1142px;width:131.5px;top:513.8px">0,00 USD</div>
<div class="c r" style="left:1281px;width:127.5px;top:513.8px">0,00 USD</div>
<div class="c r" style="left:1416px;width:120.5px;top:513.8px">0,00 USD</div>
<div class="c r" style="left:1544px;width:136.5px;top:513.8px">0,00 USD</div>
<div class="c r" style="left:1688px;width:141.5px;top:513.8px">0,00 USD</div>
<div class="a" style="left:43px;top:534.33px;width:1px;height:23.53px;background:#E5E6E8"></div>
<div class="a" style="left:72px;top:534.33px;width:1px;height:23.53px;background:#E5E6E8"></div>
<div class="a" style="left:310px;top:534.33px;width:1px;height:23.53px;background:#E5E6E8"></div>
<div class="a" style="left:424px;top:534.33px;width:1px;height:23.53px;background:#E5E6E8"></div>
<div class="a" style="left:569px;top:534.33px;width:1px;height:23.53px;background:#E5E6E8"></div>
<div class="a" style="left:707px;top:534.33px;width:1px;height:23.53px;background:#E5E6E8"></div>
<div class="a" style="left:852px;top:534.33px;width:1px;height:23.53px;background:#E5E6E8"></div>
<div class="a" style="left:998px;top:534.33px;width:1px;height:23.53px;background:#E5E6E8"></div>
<div class="a" style="left:1142px;top:534.33px;width:1px;height:23.53px;background:#E5E6E8"></div>
<div class="a" style="left:1281px;top:534.33px;width:1px;height:23.53px;background:#E5E6E8"></div>
<div class="a" style="left:1416px;top:534.33px;width:1px;height:23.53px;background:#E5E6E8"></div>
<div class="a" style="left:1544px;top:534.33px;width:1px;height:23.53px;background:#E5E6E8"></div>
<div class="a" style="left:1688px;top:534.33px;width:1px;height:23.53px;background:#E5E6E8"></div>
<div class="a" style="left:43px;top:556.86px;width:1794px;height:1px;background:#E5E6E8"></div>
<svg class="a" style="left:183px;top:540px" width="17" height="12" viewBox="0 0 17 12"><path d="M14.9 6 H2.1 M7.2 1.2 L2.1 6 L7.2 10.8" fill="none" stroke="#2E7B0C" stroke-width="1.5" stroke-linejoin="round"/></svg>
<div class="c" style="left:318.5px;top:537.33px">B9</div>
<div class="c" style="left:432.5px;top:537.33px">Cash receipt</div>
<div class="c r" style="left:569px;width:130.5px;top:537.33px">2.567.262,99 USD</div>
<div class="c r" style="left:707px;width:137.5px;top:537.33px">2.567.262,99 USD</div>
<div class="c r" style="left:852px;width:138.5px;top:537.33px">0,00 USD</div>
<div class="c r" style="left:998px;width:136.5px;top:537.33px">0,00 USD</div>
<div class="c r" style="left:1142px;width:131.5px;top:537.33px">0,00 USD</div>
<div class="c r" style="left:1281px;width:127.5px;top:537.33px">0,00 USD</div>
<div class="c r" style="left:1416px;width:120.5px;top:537.33px">0,00 USD</div>
<div class="c r" style="left:1544px;width:136.5px;top:537.33px">0,00 USD</div>
<div class="c r" style="left:1688px;width:141.5px;top:537.33px">0,00 USD</div>
<div class="a" style="left:43px;top:557.86px;width:1px;height:23.53px;background:#E5E6E8"></div>
<div class="a" style="left:72px;top:557.86px;width:1px;height:23.53px;background:#E5E6E8"></div>
<div class="a" style="left:310px;top:557.86px;width:1px;height:23.53px;background:#E5E6E8"></div>
<div class="a" style="left:424px;top:557.86px;width:1px;height:23.53px;background:#E5E6E8"></div>
<div class="a" style="left:569px;top:557.86px;width:1px;height:23.53px;background:#E5E6E8"></div>
<div class="a" style="left:707px;top:557.86px;width:1px;height:23.53px;background:#E5E6E8"></div>
<div class="a" style="left:852px;top:557.86px;width:1px;height:23.53px;background:#E5E6E8"></div>
<div class="a" style="left:998px;top:557.86px;width:1px;height:23.53px;background:#E5E6E8"></div>
<div class="a" style="left:1142px;top:557.86px;width:1px;height:23.53px;background:#E5E6E8"></div>
<div class="a" style="left:1281px;top:557.86px;width:1px;height:23.53px;background:#E5E6E8"></div>
<div class="a" style="left:1416px;top:557.86px;width:1px;height:23.53px;background:#E5E6E8"></div>
<div class="a" style="left:1544px;top:557.86px;width:1px;height:23.53px;background:#E5E6E8"></div>
<div class="a" style="left:1688px;top:557.86px;width:1px;height:23.53px;background:#E5E6E8"></div>
<div class="a" style="left:43px;top:580.39px;width:1794px;height:1px;background:#E5E6E8"></div>
<svg class="a" style="left:183px;top:564px" width="17" height="12" viewBox="0 0 17 12"><path d="M1.5 6 H14.3 M9.2 1.2 L14.3 6 L9.2 10.8" fill="none" stroke="#E60000" stroke-width="1.5" stroke-linejoin="round"/></svg>
<div class="c" style="left:318.5px;top:560.86px">F1</div>
<div class="c" style="left:432.5px;top:560.86px">Posting of purchasi...</div>
<div class="c r" style="left:569px;width:130.5px;top:560.86px">-1.000.000,00 USD</div>
<div class="c r" style="left:707px;width:137.5px;top:560.86px">-1.152.915,56 USD</div>
<div class="c r" style="left:852px;width:138.5px;top:560.86px">-3.182,39 USD</div>
<div class="c r" style="left:998px;width:136.5px;top:560.86px">0,00 USD</div>
<div class="c r" style="left:1142px;width:131.5px;top:560.86px">0,00 USD</div>
<div class="c r" style="left:1281px;width:127.5px;top:560.86px">0,00 USD</div>
<div class="c r" style="left:1416px;width:120.5px;top:560.86px">0,00 USD</div>
<div class="c r" style="left:1544px;width:136.5px;top:560.86px">0,00 USD</div>
<div class="c r" style="left:1688px;width:141.5px;top:560.86px">0,00 USD</div>
<div class="a" style="left:43px;top:581.39px;width:1px;height:23.53px;background:#E5E6E8"></div>
<div class="a" style="left:72px;top:581.39px;width:1px;height:23.53px;background:#E5E6E8"></div>
<div class="a" style="left:310px;top:581.39px;width:1px;height:23.53px;background:#E5E6E8"></div>
<div class="a" style="left:424px;top:581.39px;width:1px;height:23.53px;background:#E5E6E8"></div>
<div class="a" style="left:569px;top:581.39px;width:1px;height:23.53px;background:#E5E6E8"></div>
<div class="a" style="left:707px;top:581.39px;width:1px;height:23.53px;background:#E5E6E8"></div>
<div class="a" style="left:852px;top:581.39px;width:1px;height:23.53px;background:#E5E6E8"></div>
<div class="a" style="left:998px;top:581.39px;width:1px;height:23.53px;background:#E5E6E8"></div>
<div class="a" style="left:1142px;top:581.39px;width:1px;height:23.53px;background:#E5E6E8"></div>
<div class="a" style="left:1281px;top:581.39px;width:1px;height:23.53px;background:#E5E6E8"></div>
<div class="a" style="left:1416px;top:581.39px;width:1px;height:23.53px;background:#E5E6E8"></div>
<div class="a" style="left:1544px;top:581.39px;width:1px;height:23.53px;background:#E5E6E8"></div>
<div class="a" style="left:1688px;top:581.39px;width:1px;height:23.53px;background:#E5E6E8"></div>
<div class="a" style="left:43px;top:603.92px;width:1794px;height:1px;background:#E5E6E8"></div>
<svg class="a" style="left:183px;top:585px" width="17" height="16" viewBox="0 0 17 16"><path d="M8.1 14 H2 V2.65 H14.2 V6.8" fill="none" stroke="#1F6BC6" stroke-width="1.5"/><text x="5.2" y="12" font-family="Liberation Sans" font-size="9" font-weight="bold" text-anchor="middle" fill="#1F6BC6">$</text><path d="M8.1 6.5 H12.5 M8.1 8.5 H11 M8.1 10.4 H9.9" stroke="#1F6BC6" stroke-width="1.1"/><circle cx="13.7" cy="9.3" r="1.3" fill="#1F6BC6"/><path d="M10.5 15 V13.8 Q10.5 12.2 13.1 12.2 Q15.8 12.2 15.8 13.8 V15 Z" fill="#1F6BC6"/></svg>
<div class="c r" style="left:569px;width:130.5px;top:584.39px">1.554.181,13 USD</div>
<div class="c r" style="left:707px;width:137.5px;top:584.39px">1.395.551,57 USD</div>
<div class="c r" style="left:852px;width:138.5px;top:584.39px">1.392.369,18 USD</div>
<div class="c r" style="left:998px;width:136.5px;top:584.39px">1.392.369,18 USD</div>
<div class="c r" style="left:1142px;width:131.5px;top:584.39px">1.392.369,18 USD</div>
<div class="c r" style="left:1281px;width:127.5px;top:584.39px">1.392.369,18 USD</div>
<div class="c r" style="left:1416px;width:120.5px;top:584.39px">1.392.369,18 USD</div>
<div class="c r" style="left:1544px;width:136.5px;top:584.39px">1.392.369,18 USD</div>
<div class="c r" style="left:1688px;width:141.5px;top:584.39px">1.392.369,18 USD</div>
<div class="a" style="left:39px;top:603.9200000000001px;width:1798px;height:2px;background:#8F8F8F"></div>
<div class="a" style="left:72px;top:603.9200000000001px;width:1px;height:2px;background:#E8E8E8"></div>
<div class="a" style="left:310px;top:603.9200000000001px;width:1px;height:2px;background:#E8E8E8"></div>
<div class="a" style="left:424px;top:603.9200000000001px;width:1px;height:2px;background:#E8E8E8"></div>
<div class="a" style="left:569px;top:603.9200000000001px;width:1px;height:2px;background:#E8E8E8"></div>
<div class="a" style="left:707px;top:603.9200000000001px;width:1px;height:2px;background:#E8E8E8"></div>
<div class="a" style="left:852px;top:603.9200000000001px;width:1px;height:2px;background:#E8E8E8"></div>
<div class="a" style="left:998px;top:603.9200000000001px;width:1px;height:2px;background:#E8E8E8"></div>
<div class="a" style="left:1142px;top:603.9200000000001px;width:1px;height:2px;background:#E8E8E8"></div>
<div class="a" style="left:1281px;top:603.9200000000001px;width:1px;height:2px;background:#E8E8E8"></div>
<div class="a" style="left:1416px;top:603.9200000000001px;width:1px;height:2px;background:#E8E8E8"></div>
<div class="a" style="left:1544px;top:603.9200000000001px;width:1px;height:2px;background:#E8E8E8"></div>
<div class="a" style="left:1688px;top:603.9200000000001px;width:1px;height:2px;background:#E8E8E8"></div>
<div class="c r" style="left:569px;width:130.5px;top:607.9200000000001px;font-weight:bold">0,00 *</div>
<div class="c r" style="left:707px;width:137.5px;top:607.9200000000001px;font-weight:bold">0,00 *</div>
<div class="c r" style="left:852px;width:138.5px;top:607.9200000000001px;font-weight:bold">0,00 *</div>
<div class="c r" style="left:998px;width:136.5px;top:607.9200000000001px;font-weight:bold">0,00 *</div>
<div class="c r" style="left:1142px;width:131.5px;top:607.9200000000001px;font-weight:bold">0,00 *</div>
<div class="c r" style="left:1281px;width:127.5px;top:607.9200000000001px;font-weight:bold">0,00 *</div>
<div class="c r" style="left:1416px;width:120.5px;top:607.9200000000001px;font-weight:bold">0,00 *</div>
<div class="c r" style="left:1544px;width:136.5px;top:607.9200000000001px;font-weight:bold">0,00 *</div>
<div class="c r" style="left:1688px;width:141.5px;top:607.9200000000001px;font-weight:bold">0,00 *</div>
<div class="a" style="left:9px;top:627.45px;width:1828px;height:1px;background:#E5E6E8"></div>
<div class="a" style="left:38px;top:628.45px;width:1px;height:23.53px;background:#E5E6E8"></div>
<div class="a" style="left:310px;top:628.45px;width:1px;height:23.53px;background:#E5E6E8"></div>
<div class="a" style="left:424px;top:628.45px;width:1px;height:23.53px;background:#E5E6E8"></div>
<div class="a" style="left:569px;top:628.45px;width:1px;height:23.53px;background:#E5E6E8"></div>
<div class="a" style="left:707px;top:628.45px;width:1px;height:23.53px;background:#E5E6E8"></div>
<div class="a" style="left:852px;top:628.45px;width:1px;height:23.53px;background:#E5E6E8"></div>
<div class="a" style="left:998px;top:628.45px;width:1px;height:23.53px;background:#E5E6E8"></div>
<div class="a" style="left:1142px;top:628.45px;width:1px;height:23.53px;background:#E5E6E8"></div>
<div class="a" style="left:1281px;top:628.45px;width:1px;height:23.53px;background:#E5E6E8"></div>
<div class="a" style="left:1416px;top:628.45px;width:1px;height:23.53px;background:#E5E6E8"></div>
<div class="a" style="left:1544px;top:628.45px;width:1px;height:23.53px;background:#E5E6E8"></div>
<div class="a" style="left:1688px;top:628.45px;width:1px;height:23.53px;background:#E5E6E8"></div>
<div class="a" style="left:9px;top:650.98px;width:1828px;height:1px;background:#E5E6E8"></div>
<div class="a" style="left:38px;top:651.98px;width:1px;height:23.53px;background:#E5E6E8"></div>
<div class="a" style="left:310px;top:651.98px;width:1px;height:23.53px;background:#E5E6E8"></div>
<div class="a" style="left:424px;top:651.98px;width:1px;height:23.53px;background:#E5E6E8"></div>
<div class="a" style="left:569px;top:651.98px;width:1px;height:23.53px;background:#E5E6E8"></div>
<div class="a" style="left:707px;top:651.98px;width:1px;height:23.53px;background:#E5E6E8"></div>
<div class="a" style="left:852px;top:651.98px;width:1px;height:23.53px;background:#E5E6E8"></div>
<div class="a" style="left:998px;top:651.98px;width:1px;height:23.53px;background:#E5E6E8"></div>
<div class="a" style="left:1142px;top:651.98px;width:1px;height:23.53px;background:#E5E6E8"></div>
<div class="a" style="left:1281px;top:651.98px;width:1px;height:23.53px;background:#E5E6E8"></div>
<div class="a" style="left:1416px;top:651.98px;width:1px;height:23.53px;background:#E5E6E8"></div>
<div class="a" style="left:1544px;top:651.98px;width:1px;height:23.53px;background:#E5E6E8"></div>
<div class="a" style="left:1688px;top:651.98px;width:1px;height:23.53px;background:#E5E6E8"></div>
<div class="a" style="left:9px;top:674.5100000000001px;width:1828px;height:1px;background:#E5E6E8"></div>
<div class="a" style="left:38px;top:675.5100000000001px;width:1px;height:23.53px;background:#E5E6E8"></div>
<div class="a" style="left:310px;top:675.5100000000001px;width:1px;height:23.53px;background:#E5E6E8"></div>
<div class="a" style="left:424px;top:675.5100000000001px;width:1px;height:23.53px;background:#E5E6E8"></div>
<div class="a" style="left:569px;top:675.5100000000001px;width:1px;height:23.53px;background:#E5E6E8"></div>
<div class="a" style="left:707px;top:675.5100000000001px;width:1px;height:23.53px;background:#E5E6E8"></div>
<div class="a" style="left:852px;top:675.5100000000001px;width:1px;height:23.53px;background:#E5E6E8"></div>
<div class="a" style="left:998px;top:675.5100000000001px;width:1px;height:23.53px;background:#E5E6E8"></div>
<div class="a" style="left:1142px;top:675.5100000000001px;width:1px;height:23.53px;background:#E5E6E8"></div>
<div class="a" style="left:1281px;top:675.5100000000001px;width:1px;height:23.53px;background:#E5E6E8"></div>
<div class="a" style="left:1416px;top:675.5100000000001px;width:1px;height:23.53px;background:#E5E6E8"></div>
<div class="a" style="left:1544px;top:675.5100000000001px;width:1px;height:23.53px;background:#E5E6E8"></div>
<div class="a" style="left:1688px;top:675.5100000000001px;width:1px;height:23.53px;background:#E5E6E8"></div>
<div class="a" style="left:9px;top:274.5px;width:1828px;height:1px;background:#ABB2BE"></div>
</body></html>
